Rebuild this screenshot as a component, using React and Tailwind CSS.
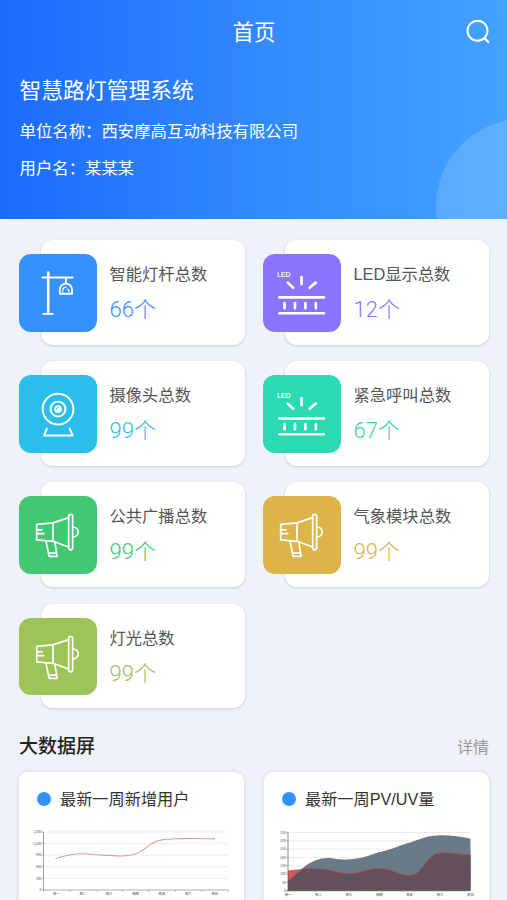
const FONT = "font-['Liberation_Sans','Noto_Sans_CJK_SC',sans-serif]"

function LampIcon() {
  return (
    <svg viewBox="0 0 78 78" className="w-full h-full" fill="none" stroke="#fff" strokeWidth="1.9" strokeLinecap="round" strokeLinejoin="round">
      <path d="M23.7 23.6H54M24.5 60.3H34" />
      <path d="M29.4 18.5V60" strokeWidth="2.5" />
      <path d="M47.2 24.5V29.5" />
      <path d="M41 40V36a6.2 6.2 0 0 1 12.4 0V40Z" />
      <path d="M44 38v-1.5a3.4 3.4 0 0 1 3.4-3.2M49 35.4a3 3 0 0 1 1.4 2.4" strokeWidth="1.3" />
    </svg>
  )
}

function LedIcon() {
  return (
    <svg viewBox="0 0 78 78" className="w-full h-full" fill="none" stroke="#fff" strokeWidth="2.7" strokeLinecap="round">
      <text x="14.3" y="22.8" fill="#fff" stroke="#fff" strokeWidth="0.2" fontSize="6.8" fontFamily="Liberation Sans">LED</text>
      <path d="M38.8 23.2V30.4M24.9 28.8L30.4 34M53 28.8L47 34" />
      <path d="M16.5 43.7H61.3M16.5 59.6H61.3" />
      <path d="M21.7 49.5V54.7M32.2 49.5V54.7M42.7 49.5V54.7M53.2 49.5V54.7" />
    </svg>
  )
}

function CameraIcon() {
  return (
    <svg viewBox="0 0 78 78" className="w-full h-full" fill="none" stroke="#fff" strokeWidth="2" strokeLinecap="round" strokeLinejoin="round">
      <circle cx="39.3" cy="34.3" r="15.5" />
      <circle cx="39.3" cy="34.3" r="7.5" />
      <circle cx="39.3" cy="34.3" r="3.9" fill="#fff" stroke="none" />
      <path d="M37.4 34.5a2 2 0 0 1 2-2" className="stroke-[#2cbeea]" strokeWidth="0.9" />
      <path d="M28 54L25.2 60.8H54L51 54" />
    </svg>
  )
}

function HornIcon() {
  return (
    <svg viewBox="0 0 78 78" className="w-full h-full" fill="none" stroke="#fff" strokeWidth="1.7" strokeLinecap="round" strokeLinejoin="round">
      <path d="M34.2 27L17.8 28.6V44.2L34.2 45.6Z" />
      <path d="M34.2 27L50 21.8M34.2 45.6L50 51.4" />
      <rect x="50" y="18.4" width="4" height="35.8" rx="2" />
      <path d="M54.6 31.2a5 5 0 0 1 0 10" />
      <path d="M18.4 34H23.2M18.4 37.8H25" />
      <path d="M27.2 45.6L30.3 60.7H38.4L36 46M30.3 57.5H37" />
    </svg>
  )
}

const MODULOS = [
  { label: '智能灯杆总数', total: 66, Icon: LampIcon, bg: 'bg-[#3591ff]', text: 'text-[#3591ff]' },
  { label: 'LED显示总数', total: 12, Icon: LedIcon, bg: 'bg-[#8b74fc]', text: 'text-[#8b74fc]' },
  { label: '摄像头总数', total: 99, Icon: CameraIcon, bg: 'bg-[#2cbeea]', text: 'text-[#2cbeea]' },
  { label: '紧急呼叫总数', total: 67, Icon: LedIcon, bg: 'bg-[#2bd9b2]', text: 'text-[#35d3a5]' },
  { label: '公共广播总数', total: 99, Icon: HornIcon, bg: 'bg-[#41c873]', text: 'text-[#41c873]' },
  { label: '气象模块总数', total: 99, Icon: HornIcon, bg: 'bg-[#dcb448]', text: 'text-[#dcb448]' },
  { label: '灯光总数', total: 99, Icon: HornIcon, bg: 'bg-[#9dc459]', text: 'text-[#9dc459]' },
]

const DIAS = ['周一', '周二', '周三', '周四', '周五', '周六', '周日']

function StatCard({ label, total, Icon, bg, text }) {
  return (
    <div className="flex items-center h-[104.5px]">
      <div className={`relative z-10 mt-px size-[77.5px] shrink-0 rounded-xl ${bg}`}>
        <Icon />
      </div>
      <div className="-ml-[55.5px] flex-1 h-full rounded-xl bg-white pl-[68.5px] pt-[22px] shadow-[0_1px_3px_rgba(0,0,0,0.16)]">
        <div className="text-[16.3px] leading-6 text-[#555] whitespace-nowrap">{label}</div>
        <div className={`mt-[9px] text-[22px] leading-[30px] font-light font-['Roboto','Noto_Sans_CJK_SC',sans-serif] ${text}`}>{total}个</div>
      </div>
    </div>
  )
}

function ChartCard({ title, children }) {
  return (
    <div className="h-[160px] rounded-[9px] bg-white shadow-[0_0_4px_rgba(0,0,0,0.12)]">
      <div className="flex items-center gap-[9px] h-[54px] pl-[18px]">
        <span className="size-[14px] rounded-full bg-[#3591ff]" />
        <span className="text-[16.2px] text-[#333] whitespace-nowrap">{title}</span>
      </div>
      {children}
    </div>
  )
}

function LineChart() {
  const marcas = ['1,500', '1,200', '900', '600', '300', '0']
  return (
    <svg viewBox="0 0 225 80" className="block w-[225px] h-[80px]" fontFamily="Noto Sans CJK SC">
      {marcas.map((m, i) => (
        <g key={m}>
          <path d={`M24.5 ${6 + i * 11.6}H209`} stroke={i === 5 ? '#888' : '#e6e6e6'} strokeWidth="0.7" />
          <path d={`M23 ${6 + i * 11.6}H24.5`} stroke="#777" strokeWidth="0.6" />
          <text x="22.5" y={7.2 + i * 11.6} fontSize="3.4" fill="#555" textAnchor="end">{m}</text>
        </g>
      ))}
      <path d="M24.5 6V65" stroke="#777" strokeWidth="0.7" />
      {DIAS.map((d, i) => (
        <g key={d}>
          <path d={`M${50.8 + i * 26.4} 64V65.5`} stroke="#777" strokeWidth="0.6" />
          <text x={37.3 + i * 26.4} y="69.4" fontSize="3.3" fill="#222" textAnchor="middle">{d}</text>
        </g>
      ))}
      <path d="M36.5 32.7C45 29.5 56 27.7 64 27.7C73 27.7 81 29.5 91 29.4C120 32 121 25 133 17.5C140 13 147 13.3 163 12.6C175 12.2 186 12.7 196 12.9" fill="none" stroke="#e39a98" strokeWidth="1.1" />
    </svg>
  )
}

function AreaChart() {
  const marcas = [350, 300, 250, 200, 150, 100, 50, 0]
  return (
    <svg viewBox="0 0 225 80" className="block w-[225px] h-[80px]" fontFamily="Noto Sans CJK SC">
      {marcas.map((m, i) => (
        <g key={m}>
          <path d={`M24 ${6.5 + i * 8.3}H206.5`} stroke="#e2e2e2" strokeWidth="0.7" />
          <path d={`M22.5 ${6.5 + i * 8.3}H24`} stroke="#777" strokeWidth="0.6" />
          <text x="21.8" y={7.7 + i * 8.3} fontSize="3.3" fill="#555" textAnchor="end">{m}</text>
        </g>
      ))}
      <path d="M24 44.5C34 43 46 42.5 54 42.8C68 42.8 73 47.5 85 47.7C96 47.7 101 42.7 115 42.4C129 42.4 134 49.3 146 49.3C160 48.5 162 27 177 26.8C188 26.5 197 28.5 206.5 29V64.5H24Z" fill="#d95556" />
      <path d="M24 55.5C30 50.5 44 32 64 32C71 32 72 34 86 33.2C101 32 109 27.8 115 26.2C130 22.5 138 18.5 146 16.4C158 13 164 9.3 176 9.3C187 9.3 198 10.8 206.5 12.7V64.5H24Z" fill="#697b86" />
      <path d="M24 55.5C28 52 34 46.5 39 42.8C46 42.5 49 42.5 54 42.8C68 42.8 73 47.5 85 47.7C96 47.7 101 42.7 115 42.4C129 42.4 134 49.3 146 49.3C160 48.5 162 27 177 26.8C188 26.5 197 28.5 206.5 29V64.5H24Z" fill="#64505a" />
      <path d="M39 42.8C46 42.5 49 42.5 54 42.8C68 42.8 73 47.5 85 47.7C96 47.7 101 42.7 115 42.4C129 42.4 134 49.3 146 49.3C160 48.5 162 27 177 26.8C188 26.5 197 28.5 206.5 29" fill="none" stroke="#b84a50" strokeWidth="0.8" />
      <path d="M24 6.5V65.5M22.5 64.8H206.5" fill="none" stroke="#555" strokeWidth="0.7" />
      {DIAS.map((d, i) => (
        <text key={d} x={24 + i * 30.4} y="69.6" fontSize="3.3" fill="#222" textAnchor="middle">{d}</text>
      ))}
    </svg>
  )
}

export default function App() {
  return (
    <div className={`w-[507px] h-[900px] overflow-hidden bg-[#eff2f8] ${FONT}`}>
      {/* Header */}
      <header className="relative h-[218.5px] overflow-hidden bg-linear-to-r from-[#1c6bfe] via-[#3189ff] to-[#43a2ff] text-white">
        <div className="absolute left-[436px] top-[119px] size-[174px] rounded-full bg-white/15" />
        <div className="grid grid-cols-3 items-center h-16 pl-[18px] pr-[17px]">
          <span />
          <span className="pt-0.5 text-center text-[21.5px]">首页</span>
          <svg viewBox="0 0 24 24" className="size-6 justify-self-end" fill="none" stroke="#fff" strokeWidth="1.9" strokeLinecap="round">
            <circle cx="11.5" cy="10.7" r="10" />
            <path d="M18.4 18L22.2 22" strokeWidth="2.3" />
          </svg>
        </div>
        <div className="px-[19.5px] pt-[11px]">
          <div className="text-[21.8px] leading-8">智慧路灯管理系统</div>
          <div className="mt-[12px] text-[16.4px] leading-6">单位名称：西安摩高互动科技有限公司</div>
          <div className="mt-[12.5px] text-[16.4px] leading-6">用户名：某某某</div>
        </div>
      </header>

      {/* Totales por módulo */}
      <div className="grid grid-cols-2 gap-x-[18px] gap-y-[16.7px] pl-[19px] pr-[18px] pt-[21.5px]">
        {MODULOS.map(m => <StatCard key={m.label} {...m} />)}
      </div>

      <div className="flex items-center justify-between pl-[19px] pr-[18px] mt-[24px] h-[30px]">
        <span className="text-[19px] font-medium text-[#222]">大数据屏</span>
        <span className="pt-0.5 text-[16px] text-[#999]">详情</span>
      </div>

      <div className="grid grid-cols-2 gap-x-5 pl-[19px] pr-[18px] mt-[10px]">
        <ChartCard title="最新一周新增用户"><LineChart /></ChartCard>
        <ChartCard title="最新一周PV/UV量"><AreaChart /></ChartCard>
      </div>
    </div>
  )
}
